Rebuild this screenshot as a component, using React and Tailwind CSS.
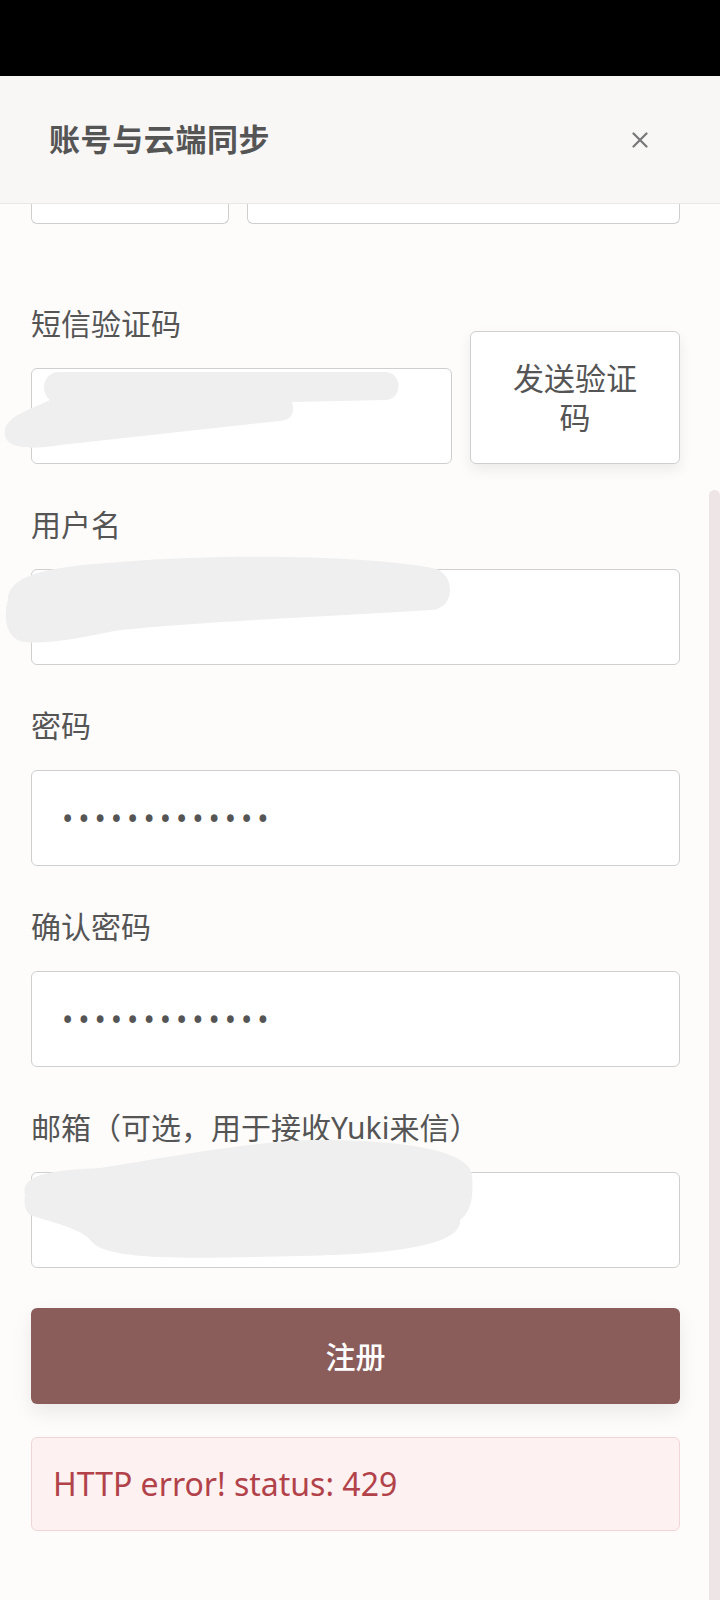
import React, { useState } from 'react';

const font = "font-['Noto_Sans','Noto_Sans_CJK_SC',sans-serif]";

const Field = ({ label, children }) => (
  <div className="mt-[41px]">
    <div className="h-[40px] leading-[40px] text-[30px] text-[#555]">{label}</div>
    <div className="mt-[24px]">{children}</div>
  </div>
);

const inputCls =
  'block w-full h-[96px] px-[28px] bg-white border border-[#cfcfcf] rounded-md text-[30px] text-[#555] outline-none';

const Redactions = () => (
  <svg className="absolute inset-0 pointer-events-none" width="720" height="1600" viewBox="0 0 720 1600">
    <g fill="#efefef">
      <path d="M 60 372 L 385 372 C 403 372, 403 400, 385 400 L 292 402 C 295 412, 292 420, 280 421 L 60 445 C 20 452, 2 445, 5 430 C 8 415, 30 410, 50 400 C 40 392, 42 372, 60 372 Z" />
      <path d="M 8 600 C 8 572, 60 566, 120 562 C 250 552, 380 558, 432 568 C 456 572, 456 608, 432 610 C 330 616, 200 622, 120 630 C 80 638, 40 646, 20 641 C 4 636, 4 612, 8 600 Z" />
      <path d="M 25 1195 C 20 1175, 50 1170, 100 1168 C 180 1155, 260 1140, 320 1140 C 400 1140, 470 1150, 472 1175 C 474 1200, 470 1212, 460 1220 C 462 1240, 420 1254, 300 1256 C 200 1258, 110 1262, 92 1242 C 82 1228, 50 1222, 30 1215 C 24 1210, 24 1200, 25 1195 Z" />
    </g>
  </svg>
);

export default function App() {
  const [sms, setSms] = useState('');
  const [username, setUsername] = useState('');
  const [password, setPassword] = useState('abcdefghijklm');
  const [confirm, setConfirm] = useState('abcdefghijklm');
  const [email, setEmail] = useState('');

  return (
    <div className={`relative w-[720px] min-h-[1600px] bg-[#fdfcfb] overflow-hidden ${font}`}>
      <div className="h-[76px] bg-black" />

      <header className="h-[128px] flex items-center justify-between pl-[49px] pr-[72px] bg-[#f8f7f5] border-b border-[#ebe7e5]">
        <h1 className="text-[31px] font-semibold text-[#555] tracking-[0.6px]">账号与云端同步</h1>
        <button type="button" aria-label="关闭" className="w-[16px] h-[16px] flex items-center justify-center">
          <svg width="16" height="16" viewBox="0 0 16 16" stroke="#777" strokeWidth="2.2" strokeLinecap="round">
            <path d="M1.5 1.5 L14.5 14.5 M14.5 1.5 L1.5 14.5" />
          </svg>
        </button>
      </header>

      <main className="pl-[31px] pr-[40px]">
        <div className="flex gap-[18px] h-[20px]">
          <div className="w-[198px] bg-white border border-t-0 border-[#cfcfcf] rounded-b-md" />
          <div className="flex-1 bg-white border border-t-0 border-[#cfcfcf] rounded-b-md" />
        </div>

        <div className="mt-[80px] flex items-end gap-[18px]">
          <div className="flex-1">
            <div className="h-[40px] leading-[40px] text-[30px] text-[#555]">短信验证码</div>
            <input
              className={`mt-[24px] ${inputCls} h-[95px]`}
              value={sms}
              onChange={(e) => setSms(e.target.value)}
            />
          </div>
          <button
            type="button"
            className="w-[210px] h-[133px] px-[40px] bg-white border border-[#cfcfcf] rounded-md shadow-[0_6px_14px_rgba(0,0,0,0.07)] text-[31px] leading-[39px] text-[#555]"
          >
            发送验证码
          </button>
        </div>

        <Field label="用户名">
          <input className={inputCls} value={username} onChange={(e) => setUsername(e.target.value)} />
        </Field>

        <Field label="密码">
          <input
            type="password"
            className={`${inputCls} tracking-[5px] pl-[30px]`}
            value={password}
            onChange={(e) => setPassword(e.target.value)}
          />
        </Field>

        <Field label="确认密码">
          <input
            type="password"
            className={`${inputCls} tracking-[5px] pl-[30px]`}
            value={confirm}
            onChange={(e) => setConfirm(e.target.value)}
          />
        </Field>

        <Field label="邮箱（可选，用于接收Yuki来信）">
          <input className={inputCls} value={email} onChange={(e) => setEmail(e.target.value)} />
        </Field>

        <button
          type="button"
          className="mt-[40px] w-full h-[96px] bg-[#8a5c5a] rounded-md text-white text-[30px] font-medium shadow-[0_8px_20px_rgba(0,0,0,0.08)]"
        >
          注册
        </button>

        <div className="mt-[33px] h-[94px] flex items-center px-[21px] bg-[#fdf1f1] border border-[#f1d5d7] rounded-md">
          <p className="text-[32px] text-[#b2424a]">HTTP error! status: 429</p>
        </div>
      </main>

      <div className="absolute right-0 top-[490px] bottom-0 w-[11px] bg-[#eee5e7] rounded-t-full" />
      <Redactions />
    </div>
  );
}
